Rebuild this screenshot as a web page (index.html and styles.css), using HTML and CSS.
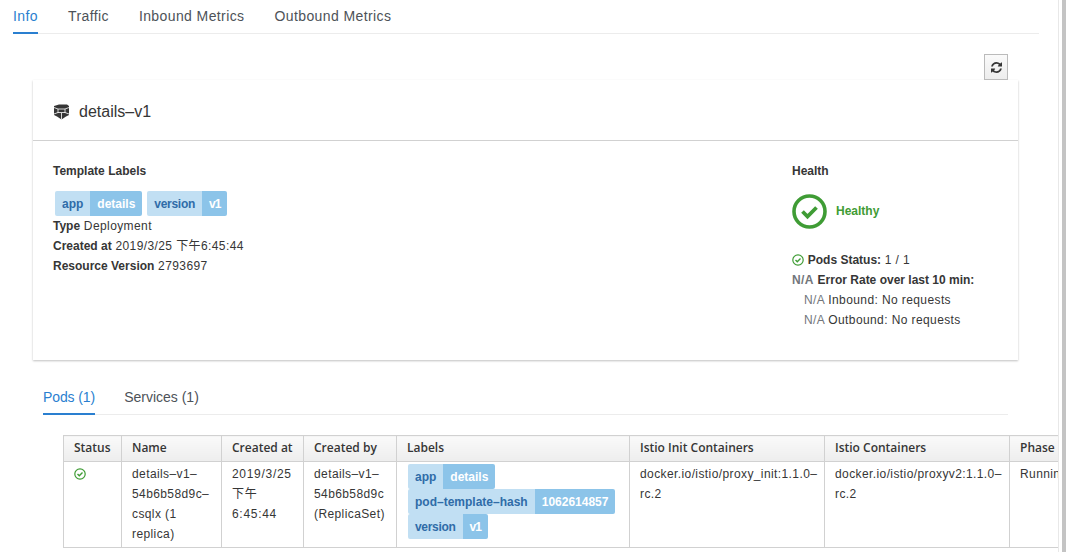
FILE: index.html

```html
<!DOCTYPE html>
<html lang="en">
<head>
    <meta charset="UTF-8">
    <meta name="viewport" content="width=device-width, initial-scale=1.0">
    <title>details-v1 - Kiali</title>
    <link rel="stylesheet" href="styles.css">
</head>
<body>
    <div class="page">
        <ul class="tabs main-tabs">
            <li class="active">Info</li>
            <li>Traffic</li>
            <li>Inbound Metrics</li>
            <li>Outbound Metrics</li>
        </ul>

        <div class="toolbar">
            <button class="refresh-btn" type="button">
                <svg width="11" height="11" viewBox="0 0 1536 1536"><path fill="#363636" d="M1511 928q0 5-1 7-64 268-268 434.5t-478 166.5q-146 0-282.5-55t-243.5-157l-129 129q-19 19-45 19t-45-19-19-45v-448q0-26 19-45t45-19h448q26 0 45 19t19 45-19 45l-137 137q71 66 161 102t187 36q134 0 250-65t186-179q11-17 53-117 8-23 30-23h192q13 0 22.5 9.5t9.5 22.5zm25-800v448q0 26-19 45t-45 19h-448q-26 0-45-19t-19-45 19-45l138-138q-148-137-349-137-134 0-250 65t-186 179q-11 17-53 117-8 23-30 23h-199q-13 0-22.5-9.5t-9.5-22.5v-7q65-268 270-434.5t480-166.5q146 0 284 55.5t245 156.5l130-129q19-19 45-19t45 19 19 45z"/></svg>
            </button>
        </div>

        <div class="card">
            <div class="card-title">
                <svg class="bundle-icon" width="17" height="16" viewBox="0 0 17 16">
                    <path fill="#363636" d="M6 0.500l8 0 2 1.500v9l-3 1.500-4.500 3-4.500-3-3-1.500v-9z"/>
                    <path fill="none" stroke="#fff" stroke-width="0.800" d="M1 3.500l4 1.500h7l4-1.500M5 5v4M12 5v4M1 10l4-1.500h7l4 1.500M8.500 9v6.500"/>
                </svg>
                <span>details–v1</span>
            </div>
            <div class="card-body">
                <div class="info-col">
                    <h3>Template Labels</h3>
                    <div class="labels">
                        <span class="label"><span class="key">app</span><span class="val">details</span></span>
                        <span class="label tight"><span class="key">version</span><span class="val">v1</span></span>
                    </div>
                    <div class="line"><b>Type</b> Deployment</div>
                    <div class="line"><b>Created at</b> 2019/3/25 下午6:45:44</div>
                    <div class="line"><b>Resource Version</b> 2793697</div>
                </div>
                <div class="health-col">
                    <h3>Health</h3>
                    <div class="health-big">
                        <svg width="35" height="35" viewBox="0 0 35 35">
                            <circle cx="17.500" cy="17.500" r="15.500" fill="none" stroke="#3f9c35" stroke-width="3.600"/>
                            <path fill="none" stroke="#3f9c35" stroke-width="3.800" d="M10.500 17.500l5 5 9-9"/>
                        </svg>
                        <span class="health-text">Healthy</span>
                    </div>
                    <div class="line">
                        <svg class="ok-icon" width="12" height="12" viewBox="0 0 12 12">
                            <circle cx="6" cy="6" r="5.200" fill="none" stroke="#3f9c35" stroke-width="1.200"/>
                            <path fill="none" stroke="#3f9c35" stroke-width="1.400" d="M3.500 6l1.800 1.800 3.200-3.200"/>
                        </svg>
                        <b>Pods Status:</b> 1 / 1
                    </div>
                    <div class="line"><span class="na">N/A</span> <b>Error Rate over last 10 min:</b></div>
                    <div class="line indent"><span class="na">N/A</span> Inbound: No requests</div>
                    <div class="line indent"><span class="na">N/A</span> Outbound: No requests</div>
                </div>
            </div>
        </div>

        <div class="sub-section">
            <ul class="tabs sub-tabs">
                <li class="active">Pods (1)</li>
                <li>Services (1)</li>
            </ul>
            <div class="table-wrap">
                <table class="pods">
                    <colgroup>
                        <col class="c-status"><col class="c-name"><col class="c-created"><col class="c-by">
                        <col class="c-labels"><col class="c-init"><col class="c-istio"><col class="c-phase">
                    </colgroup>
                    <thead>
                        <tr>
                            <th>Status</th>
                            <th>Name</th>
                            <th>Created at</th>
                            <th>Created by</th>
                            <th>Labels</th>
                            <th>Istio Init Containers</th>
                            <th>Istio Containers</th>
                            <th>Phase</th>
                        </tr>
                    </thead>
                    <tbody>
                        <tr>
                            <td>
                                <svg class="ok-icon" width="12" height="12" viewBox="0 0 12 12">
                                    <circle cx="6" cy="6" r="5.200" fill="none" stroke="#3f9c35" stroke-width="1.200"/>
                                    <path fill="none" stroke="#3f9c35" stroke-width="1.400" d="M3.500 6l1.800 1.800 3.200-3.200"/>
                                </svg>
                            </td>
                            <td>details–v1–<br>54b6b58d9c–<br>csqlx (1<br>replica)</td>
                            <td class="date-cell">2019/3/25<br>下午<br>6:45:44</td>
                            <td>details–v1–<br>54b6b58d9c<br>(ReplicaSet)</td>
                            <td class="label-cell">
                                <div class="label-row"><span class="label"><span class="key">app</span><span class="val">details</span></span></div>
                                <div class="label-row"><span class="label"><span class="key">pod–template–hash</span><span class="val">1062614857</span></span></div>
                                <div class="label-row"><span class="label tight"><span class="key">version</span><span class="val">v1</span></span></div>
                            </td>
                            <td>docker.io/istio/proxy_init:1.1.0–<br>rc.2</td>
                            <td>docker.io/istio/proxyv2:1.1.0–<br>rc.2</td>
                            <td>Running</td>
                        </tr>
                    </tbody>
                </table>
            </div>
        </div>
    </div>
    <div class="scrollbar"></div>
</body>
</html>
```

FILE: styles.css

```css
html, body {
    height: 100%;
    overflow: hidden;
}

body {
    margin: 0;
    display: flex;
    background: #fff;
    color: #363636;
    font-family: "Liberation Sans", "Noto Sans CJK SC", sans-serif;
    font-size: 12px;
    line-height: 20px;
    letter-spacing: 0.4px;
}

.page {
    width: 1058px;
    flex: none;
    overflow: hidden;
}

.scrollbar {
    flex: 1;
    border-left: 1px solid #e8e8e8;
    background: linear-gradient(to right, #fff 3px, #c4c4c4 3px);
}

.tabs {
    list-style: none;
    margin: 0;
    padding: 0;
    display: flex;
    gap: 30px;
    border-bottom: 1px solid #ececec;
    font-size: 14px;
    color: #4d5258;
}

.tabs li {
    height: 33px;
    line-height: 32px;
    box-sizing: border-box;
}

.tabs li.active {
    color: #2a7fd0;
    border-bottom: 2px solid #2a7fd0;
    margin-bottom: -1px;
    height: 34px;
}

.main-tabs {
    margin: 0 19px 0 13px;
    height: 33px;
}

.sub-tabs {
    gap: 29px;
    margin-right: 50px;
    height: 34px;
}

.sub-tabs li {
    letter-spacing: 0;
    line-height: 34px;
}

.sub-tabs li.active {
    height: 35px;
    letter-spacing: -0.1px;
}

.toolbar {
    display: flex;
    justify-content: flex-end;
    height: 46px;
    padding-right: 50px;
}

.refresh-btn {
    margin-top: 20px;
    width: 24px;
    height: 26px;
    padding: 0;
    border: 1px solid #bbb;
    background: linear-gradient(#fafafa, #ededed);
    display: flex;
    align-items: center;
    justify-content: center;
}

.card {
    margin: 0 40px 0 33px;
    height: 280px;
    box-sizing: border-box;
    background: #fff;
    box-shadow: 0 1px 2px rgba(0, 0, 0, 0.25);
}

.card-title {
    height: 61px;
    box-sizing: border-box;
    padding: 3px 0 0 20px;
    display: flex;
    align-items: center;
    gap: 9px;
    font-size: 16px;
    letter-spacing: 0;
    border-bottom: 1px solid #d1d1d1;
}

.card-body {
    display: flex;
    justify-content: space-between;
    padding: 20px 20px 0;
}

.info-col {
    width: 739px;
}

.health-col {
    flex: 1;
}

h3 {
    margin: 0;
    font-size: 12px;
    font-weight: bold;
    line-height: 20px;
    letter-spacing: 0;
}

b {
    font-weight: bold;
    letter-spacing: 0;
}

.labels {
    display: flex;
    gap: 5px;
    margin: 10px 0 0 2px;
}

.label {
    display: inline-flex;
    height: 25px;
    line-height: 26px;
    font-weight: bold;
    letter-spacing: 0;
    border-radius: 2px;
    overflow: hidden;
}

.key {
    background: #c1dff3;
    color: #2f6ca8;
    padding: 0 7px;
}

.val {
    background: #8cc4e9;
    color: #fff;
    padding: 0 7px;
}

.tight .key {
    letter-spacing: -0.3px;
}

.tight .val {
    letter-spacing: -1px;
}

.line {
    height: 20px;
}

.health-big {
    display: flex;
    align-items: center;
    gap: 9px;
    margin: 13px 0 21px;
    color: #3f9c35;
    font-weight: bold;
    letter-spacing: 0;
}

.health-text {
    line-height: 18px;
    height: 18px;
    margin-top: -2px;
}

.ok-icon {
    vertical-align: -2px;
}

.na {
    color: #72767b;
    font-weight: bold;
}

.indent {
    padding-left: 12px;
}

.indent .na {
    font-weight: normal;
}

.sub-section {
    margin: 20px 0 0 43px;
}

.table-wrap {
    margin: 20px 0 0 20px;
}

.pods {
    border-collapse: collapse;
    table-layout: fixed;
    width: 1000px;
}

.c-status { width: 58px; }
.c-name { width: 100px; }
.c-created { width: 82px; }
.c-by { width: 93px; }
.c-labels { width: 233px; }
.c-init { width: 195px; }
.c-istio { width: 185px; }
.c-phase { width: 54px; }

.pods th, .pods td {
    border: 1px solid #d1d1d1;
    text-align: left;
    vertical-align: top;
    overflow: hidden;
    white-space: nowrap;
    padding: 0 10px;
}

.pods th {
    height: 26px;
    box-sizing: border-box;
    background: linear-gradient(#fafafa, #ededed);
    font-family: "Open Sans", sans-serif;
    font-weight: 600;
    letter-spacing: 0;
    line-height: 23px;
}

.pods td {
    height: 86px;
    padding-top: 2px;
    padding-bottom: 2px;
    box-sizing: border-box;
}

.pods td.date-cell {
    letter-spacing: 0.7px;
}

.pods td.label-cell {
    padding: 2px 0 0 11px;
}

.label-row {
    height: 25px;
}
```
